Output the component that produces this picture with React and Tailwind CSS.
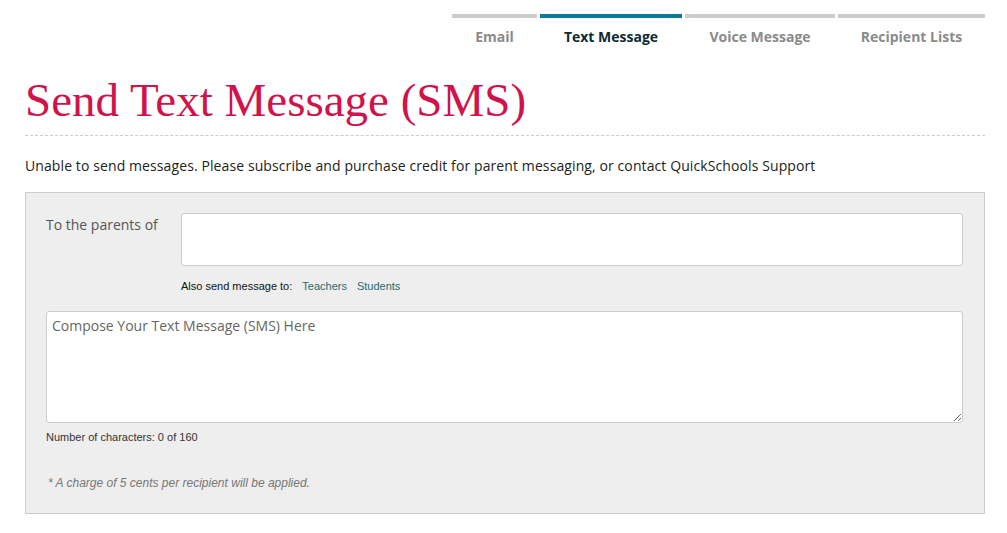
import React from "react";

const sans = { fontFamily: '"Open Sans", "Liberation Sans", Arial, sans-serif' };
const small = { fontFamily: '"Liberation Sans", Arial, sans-serif' };

function Tab({ label, width, active }) {
  return (
    <div
      className={
        "border-t-4 pt-[9px] text-center text-[14px] leading-[20px] font-bold " +
        (active ? "border-[#0a7b99] text-[#0f2a33]" : "border-[#cccccc] text-[#8a8a8a]")
      }
      style={{ width }}
    >
      {label}
    </div>
  );
}

export default function App() {
  return (
    <div className="min-h-[533px] bg-white" style={sans}>
      <div className="ml-[25px] w-[960px]">
        <div className="flex justify-end gap-[3px] pt-[14px]">
          <Tab label="Email" width={85} />
          <Tab label="Text Message" width={142} active />
          <Tab label="Voice Message" width={150} />
          <Tab label="Recipient Lists" width={147} />
        </div>
        <h1
          className="mt-[25px] h-[64px] border-b border-dashed border-[#cccccc] text-[47px] leading-[56px] text-[#d0134a] font-normal"
          style={{ fontFamily: '"Liberation Serif", "Times New Roman", serif' }}
        >
          Send Text Message (SMS)
        </h1>
        <p className="mt-[20px] text-[14px] leading-[20px] tracking-[0.1px] text-[#222222]">
          Unable to send messages. Please subscribe and purchase credit for parent messaging, or contact QuickSchools Support
        </p>
        <div className="mt-[16px] border border-[#cccccc] bg-[#eeeeee] pt-[20px] pl-[20px] pr-[21px] pb-[22px]">
          <div className="flex">
            <div className="w-[135px] shrink-0 pt-[2px] text-[14px] leading-[20px] text-[#555555]">
              To the parents of
            </div>
            <div className="flex-1">
              <div className="h-[53px] rounded-[3px] border border-[#cccccc] bg-white"></div>
              <div className="mt-[12px] flex text-[11px] leading-[16px] text-[#111111]" style={small}>
                <span>Also send message to:</span>
                <span className="ml-[10px] text-[#1d6b70]">Teachers</span>
                <span className="ml-[10px] text-[#1d6b70]">Students</span>
              </div>
            </div>
          </div>
          <textarea
            className="mt-[17px] block h-[112px] w-full rounded-[3px] border border-[#cccccc] bg-white px-[5px] pt-[4px] text-[14px] leading-[20px] text-[#333333] placeholder:text-[#666666] outline-none"
            style={sans}
            placeholder="Compose Your Text Message (SMS) Here"
          ></textarea>
          <div className="mt-[6px] text-[11px] leading-[16px] text-[#333333]" style={small}>
            Number of characters: 0 of 160
          </div>
          <div className="mt-[30px] pl-[2px] text-[12px] leading-[16px] italic text-[#777777]" style={small}>
            * A charge of 5 cents per recipient will be applied.
          </div>
        </div>
      </div>
    </div>
  );
}
